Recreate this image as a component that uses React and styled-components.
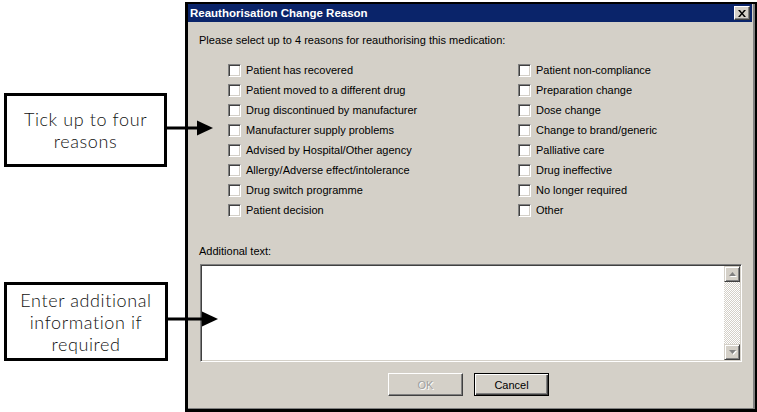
import React from "react";
import styled, { createGlobalStyle } from "styled-components";

const leftReasons = [
  "Patient has recovered",
  "Patient moved to a different drug",
  "Drug discontinued by manufacturer",
  "Manufacturer supply problems",
  "Advised by Hospital/Other agency",
  "Allergy/Adverse effect/intolerance",
  "Drug switch programme",
  "Patient decision",
];

const rightReasons = [
  "Patient non-compliance",
  "Preparation change",
  "Dose change",
  "Change to brand/generic",
  "Palliative care",
  "Drug ineffective",
  "No longer required",
  "Other",
];

const GlobalStyle = createGlobalStyle`
  html, body {
    margin: 0;
    padding: 0;
    background: #fff;
  }
  body {
    font-family: "Liberation Sans", Arial, sans-serif;
  }
`;

const Arrow = ({ width, height, y }) => (
  <ArrowSvg width={width} height={height} viewBox={`0 0 ${width} ${height}`}>
    <rect x="0" y={y - 1.5} width={width - 14} height="3" fill="#000" />
    <polygon points={`${width - 16},${y - 7.5} ${width},${y} ${width - 16},${y + 7.5}`} fill="#000" />
  </ArrowSvg>
);

const App = () => {
  return (
    <Page>
      <GlobalStyle />
      <Callouts>
        <CalloutRow>
          <CalloutBox $w={163} $h={74}>
            Tick up to four
            <br />
            reasons
          </CalloutBox>
          <Arrow width={46} height={74} y={35} />
        </CalloutRow>
        <CalloutRow>
          <CalloutBox $w={164} $h={79}>
            Enter additional
            <br />
            information if
            <br />
            required
          </CalloutBox>
          <Arrow width={50} height={79} y={37} />
        </CalloutRow>
      </Callouts>

      <Dialog>
        <TitleBar>
          <span>Reauthorisation Change Reason</span>
          <CloseButton>
            <svg width="8" height="7" viewBox="0 0 8 7">
              <path d="M0 0h2l2 2.5L6 0h2L5 3.5 8 7H6L4 4.5 2 7H0l3-3.5z" fill="#000" />
            </svg>
          </CloseButton>
        </TitleBar>

        <Body>
          <Text>Please select up to 4 reasons for reauthorising this medication:</Text>
          <Reasons>
            {[...leftReasons, ...rightReasons].map((r) => (
              <Reason key={r}>
                <Checkbox />
                <Text>{r}</Text>
              </Reason>
            ))}
          </Reasons>

          <FieldLabel>Additional text:</FieldLabel>
          <TextBox>
            <Scrollbar>
              <ScrollButton>
                <svg width="7" height="4" viewBox="0 0 7 4">
                  <path d="M3.5 0L7 4H0z" fill="#808080" />
                </svg>
              </ScrollButton>
              <Track />
              <ScrollButton>
                <svg width="7" height="4" viewBox="0 0 7 4">
                  <path d="M0 0h7L3.5 4z" fill="#808080" />
                </svg>
              </ScrollButton>
            </Scrollbar>
          </TextBox>

          <Buttons>
            <Button $disabled>OK</Button>
            <Button $default>Cancel</Button>
          </Buttons>
        </Body>
      </Dialog>
    </Page>
  );
};

export default App;

const Page = styled.div`
  display: flex;
  width: 757px;
  height: 412px;
  overflow: hidden;
  background: #fff;
`;

const Callouts = styled.div`
  position: relative;
  z-index: 1;
  width: 185px;
  flex-shrink: 0;
  display: flex;
  flex-direction: column;
  gap: 115px;
  padding-top: 93px;
  box-sizing: border-box;
`;

const CalloutRow = styled.div`
  display: flex;
  margin-left: 4px;
`;

const CalloutBox = styled.div`
  width: ${(p) => p.$w}px;
  height: ${(p) => p.$h}px;
  flex-shrink: 0;
  box-sizing: border-box;
  border: 3px solid #000;
  background: #fff;
  display: flex;
  align-items: center;
  justify-content: center;
  text-align: center;
  font-family: Lato, "Liberation Sans", sans-serif;
  font-weight: 300;
  font-size: 18px;
  letter-spacing: 0.6px;
  line-height: 22px;
  color: #111;
`;

const ArrowSvg = styled.svg`
  flex-shrink: 0;
  display: block;
`;

const Dialog = styled.div`
  flex: 1;
  margin-top: 2px;
  height: 410px;
  box-sizing: border-box;
  border-style: solid;
  border-color: #000;
  border-width: 2px 2px 3px 3px;
  box-shadow: inset -2px -1px #808080;
  background: #d4d0c8;
  display: flex;
  flex-direction: column;
`;

const TitleBar = styled.div`
  height: 18px;
  margin-right: 3px;
  padding: 0 2px 0 2px;
  background: #0a246a;
  color: #fff;
  font-weight: bold;
  font-size: 11.5px;
  display: flex;
  align-items: center;
  justify-content: space-between;
`;

const CloseButton = styled.div`
  width: 16px;
  height: 14px;
  box-sizing: border-box;
  background: #d4d0c8;
  border: 1px solid;
  border-color: #fff #404040 #404040 #fff;
  box-shadow: inset -1px -1px #808080;
  display: flex;
  align-items: center;
  justify-content: center;
`;

const Body = styled.div`
  padding: 12px 11px 0;
  display: flex;
  flex-direction: column;
`;

const Text = styled.span`
  font-size: 11px;
  line-height: 13px;
  color: #000;
  white-space: nowrap;
`;

const Reasons = styled.div`
  margin: 13px 0 0 29px;
  display: grid;
  grid-template-columns: 290px 1fr;
  grid-template-rows: repeat(8, 20px);
  grid-auto-flow: column;
`;

const Reason = styled.div`
  display: flex;
  align-items: center;
  gap: 5px;
`;

const Checkbox = styled.span`
  width: 13px;
  height: 13px;
  box-sizing: border-box;
  flex-shrink: 0;
  background: #fff;
  border: 1px solid;
  border-color: #808080 #fff #fff #808080;
  box-shadow: inset 1px 1px #404040, inset -1px -1px #d4d0c8;
`;

const FieldLabel = styled(Text)`
  margin-top: 25px;
`;

const TextBox = styled.div`
  margin: 6px 0 0 1px;
  width: 542px;
  height: 98px;
  box-sizing: border-box;
  background: #fff;
  border: 1px solid;
  border-color: #808080 #fff #fff #808080;
  box-shadow: inset 1px 1px #404040, inset -1px -1px #d4d0c8;
  padding: 1px;
  display: flex;
  justify-content: flex-end;
`;

const Scrollbar = styled.div`
  width: 16px;
  display: flex;
  flex-direction: column;
`;

const ScrollButton = styled.div`
  height: 16px;
  box-sizing: border-box;
  background: #d4d0c8;
  border: 1px solid;
  border-color: #d4d0c8 #404040 #404040 #d4d0c8;
  box-shadow: inset 1px 1px #fff, inset -1px -1px #808080;
  display: flex;
  align-items: center;
  justify-content: center;
  svg {
    filter: drop-shadow(1px 1px 0 #fff);
  }
`;

const Track = styled.div`
  flex: 1;
  background-image: conic-gradient(#d4d0c8 25%, #fff 0 50%, #d4d0c8 0 75%, #fff 0);
  background-size: 2px 2px;
`;

const Buttons = styled.div`
  margin-top: 11px;
  padding-right: 6px;
  display: flex;
  justify-content: center;
  gap: 11px;
`;

const Button = styled.div`
  width: 75px;
  height: 23px;
  box-sizing: border-box;
  display: flex;
  align-items: center;
  justify-content: center;
  font-size: 11px;
  background: #d4d0c8;
  color: ${(p) => (p.$disabled ? "#a0a0a0" : "#000")};
  text-shadow: ${(p) => (p.$disabled ? "1px 1px 0 #fff" : "none")};
  border: 1px solid;
  border-color: ${(p) => (p.$default ? "#000" : "#fff #404040 #404040 #fff")};
  box-shadow: ${(p) =>
    p.$default
      ? "inset 1px 1px #fff, inset -1px -1px #404040, inset -2px -2px #808080"
      : "inset -1px -1px #808080"};
`;
